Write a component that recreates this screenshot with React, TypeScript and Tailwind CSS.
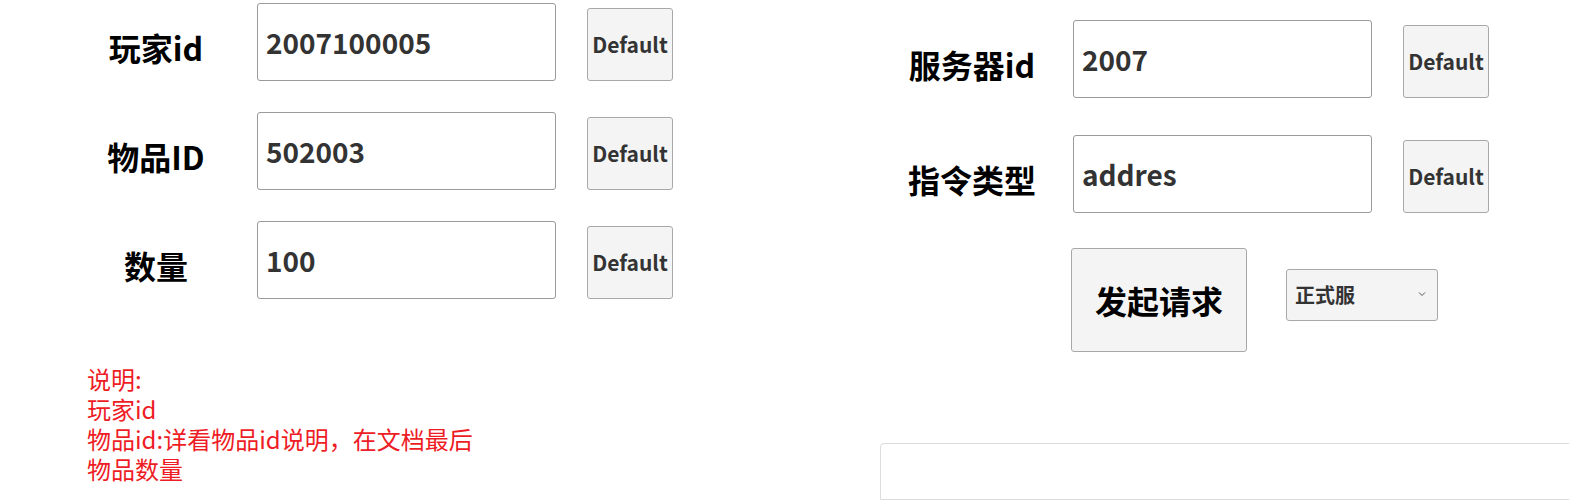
import { useState } from "react";

const font = "font-['Noto_Sans_CJK_SC','Noto_Sans',sans-serif]";

interface FieldRowProps {
  label: string;
  value: string;
  defaultValue: string;
  onChange: (v: string) => void;
}

const FieldRow = ({ label, value, defaultValue, onChange }: FieldRowProps) => {
  return (
    <div className="flex items-end">
      <div className="w-[160px] mb-[14px] text-center text-[32px] leading-[40px] font-bold text-black">
        {label}
      </div>
      <input
        value={value}
        onChange={(e) => onChange(e.target.value)}
        className="ml-[21px] w-[299px] h-[78px] px-2 border border-[#9a9a9a] rounded-[3px] bg-white text-[28px] font-bold text-[#333] outline-none"
      />
      <button
        onClick={() => onChange(defaultValue)}
        className="ml-[31px] w-[86px] h-[73px] border border-[#a8a8a8] rounded-[3px] bg-[#f4f4f4] text-[21px] font-bold text-[#333]"
      >
        Default
      </button>
    </div>
  );
};

const App = () => {
  const [playerId, setPlayerId] = useState("2007100005");
  const [itemId, setItemId] = useState("502003");
  const [count, setCount] = useState("100");
  const [serverId, setServerId] = useState("2007");
  const [cmd, setCmd] = useState("addres");
  const [env, setEnv] = useState("prod");

  return (
    <div className={`${font} h-[500px] w-full overflow-hidden bg-white flex`}>
      {/* left column */}
      <div className="pl-[76px] pt-[3px] flex flex-col">
        <div className="flex flex-col gap-[31px]">
          <FieldRow label="玩家id" value={playerId} defaultValue="2007100005" onChange={setPlayerId} />
          <FieldRow label="物品ID" value={itemId} defaultValue="502003" onChange={setItemId} />
          <FieldRow label="数量" value={count} defaultValue="100" onChange={setCount} />
        </div>
        {/* 说明 */}
        <div className="mt-[65px] ml-[11px] text-[24px] leading-[30px] text-[#ee1c25]">
          <div>说明:</div>
          <div>玩家id</div>
          <div>物品id:详看物品id说明，在文档最后</div>
          <div>物品数量</div>
        </div>
      </div>

      {/* right column */}
      <div className="ml-[219px] pt-[20px] flex flex-col">
        <div className="flex flex-col gap-[37px]">
          <FieldRow label="服务器id" value={serverId} defaultValue="2007" onChange={setServerId} />
          <FieldRow label="指令类型" value={cmd} defaultValue="addres" onChange={setCmd} />
        </div>
        <div className="mt-[35px] ml-[179px] flex items-start">
          <button className="w-[176px] h-[104px] border border-[#a8a8a8] rounded-[3px] bg-[#f4f4f4] text-[32px] font-bold text-black">
            发起请求
          </button>
          <div className="relative ml-[39px] mt-[21px]">
            <select
              value={env}
              onChange={(e) => setEnv(e.target.value)}
              className="appearance-none w-[152px] h-[52px] pl-2 border border-[#a8a8a8] rounded-[3px] bg-[#f4f4f4] text-[20px] font-bold text-[#333] outline-none"
            >
              <option value="prod">正式服</option>
              <option value="test">测试服</option>
            </select>
            <svg
              className="pointer-events-none absolute right-[12px] top-[22px] w-[8px] h-[6px]"
              viewBox="0 0 8 6"
              fill="none"
              stroke="#555"
              strokeWidth={1}
            >
              <path d="M1 1.5L4 4.5L7 1.5" />
            </svg>
          </div>
        </div>
        <div className="mt-[91px] ml-[-12px] w-[720px] h-[100px] border border-[#dcdcdc] rounded-tl-[4px] bg-white" />
      </div>
    </div>
  );
};

export default App;
